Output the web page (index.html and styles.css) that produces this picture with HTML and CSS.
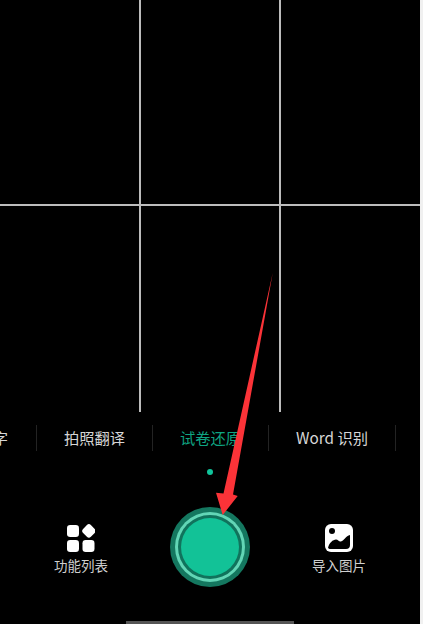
FILE: index.html
```html
<!DOCTYPE html>
<html lang="zh">
<head>
<meta charset="utf-8">
<title>试卷还原</title>
<link rel="stylesheet" href="styles.css">
</head>
<body>
<main class="camera">
  <section class="viewfinder">
    <div class="grid-row grid-row-top">
      <div class="cell"></div><div class="cell"></div><div class="cell cell-last"></div>
    </div>
    <div class="grid-row grid-row-bottom">
      <div class="cell"></div><div class="cell"></div><div class="cell cell-last"></div>
    </div>
  </section>
  <nav class="modes">
    <div class="mode mode-a">文字</div>
    <div class="mode mode-b">拍照翻译</div>
    <div class="mode mode-c active">试卷还原</div>
    <div class="mode mode-d">Word 识别</div>
  </nav>
  <div class="dot-row"><span class="dot"></span></div>
  <section class="controls">
    <div class="tool tool-left">
      <svg class="tool-icon" viewBox="0 0 28 28" width="28" height="28">
        <rect x="0" y="1" width="12" height="12" rx="3.200" fill="#fff"/>
        <rect x="16.400" y="1.400" width="11" height="11" rx="2.800" fill="#fff" transform="rotate(45 21.900 6.900)"/>
        <rect x="0" y="16" width="12" height="12" rx="3.200" fill="#fff"/>
        <rect x="15.500" y="16" width="12" height="12" rx="3.200" fill="#fff"/>
      </svg>
      <span class="tool-label">功能列表</span>
    </div>
    <div class="shutter"><div class="shutter-line"><div class="shutter-gap"><div class="shutter-core"></div></div></div></div>
    <div class="tool tool-right">
      <svg class="tool-icon" viewBox="0 0 28 28" width="28" height="28">
        <rect x="0" y="0" width="28" height="28" rx="6" fill="#fff"/>
        <circle cx="7" cy="7" r="3" fill="#000"/>
        <path d="M3 24 C4 19 8 15.500 11 15.500 C13 15.500 14 18 16 17.500 C18.500 17 21 12 25 11 L25 21 Q25 25 21 25 L4.500 25 Z" fill="#000"/>
      </svg>
      <span class="tool-label">导入图片</span>
    </div>
  </section>
  <div class="home-bar"></div>
  <svg class="arrow" viewBox="0 0 423 624" width="423" height="624">
    <path d="M272.700 273 L233 494.600 L237.700 496 L222.700 515 L216 492.700 L223.500 493.500 Z" fill="#fb3338"/>
  </svg>
</main>
</body>
</html>
```
FILE: styles.css
```css
* { box-sizing: border-box; }
html, body { margin: 0; height: 100%; }
body { background: #f0f0f0; overflow: hidden; }
.camera {
  position: relative;
  width: 420px;
  height: 624px;
  background: #000;
  font-family: "Noto Sans CJK SC", "Noto Sans", sans-serif;
  display: flex;
  flex-direction: column;
  overflow: hidden;
}
.viewfinder { height: 412px; flex: none; display: flex; flex-direction: column; }
.grid-row { display: grid; grid-template-columns: 141px 140px 1fr; }
.grid-row-top { height: 206px; }
.grid-row-bottom { height: 206px; }
.cell { border-right: 2px solid #bcbcbc; }
.cell-last { border-right: 0; }
.grid-row-top .cell { border-bottom: 2px solid #bcbcbc; }
.modes {
  flex: none;
  height: 26px;
  margin-top: 13px;
  display: flex;
  align-items: center;
  margin-left: -83px;
}
.mode {
  flex: none;
  height: 26px;
  line-height: 24px;
  font-size: 15.300px;
  color: #d6d6d6;
  text-align: center;
  border-right: 1px solid #232323;
}
.mode-a { width: 120px; text-align: right; padding-right: 28px; }
.mode-b { width: 116px; }
.mode-c { width: 116px; }
.mode-d { width: 127px; }
.active { color: #0fa583; }
.dot-row { flex: none; height: 6px; margin-top: 18px; display: flex; justify-content: center; }
.dot { width: 6px; height: 6px; border-radius: 50%; background: #10c49b; }
.controls { flex: 1; position: relative; margin-top: 24px; display: grid; grid-template-columns: 170px 80px 1fr; align-items: start; }
.tool { display: flex; flex-direction: column; align-items: center; padding-top: 25px; }
.tool-left { padding-right: 8px; }
.tool-right { padding-left: 8px; }
.tool-icon { display: block; }
.tool-label { font-size: 13.500px; line-height: 16px; margin-top: 5px; color: #d0d0d0; }
.shutter { margin-top: 8px; width: 80px; height: 80px; border-radius: 50%; background: #14775f; padding: 5px; }
.shutter-line { width: 100%; height: 100%; border-radius: 50%; background: #62d6b6; padding: 3px; }
.shutter-gap { width: 100%; height: 100%; border-radius: 50%; background: #10735c; padding: 3px; }
.shutter-core { width: 100%; height: 100%; border-radius: 50%; background: #12c297; }
.home-bar { position: absolute; left: 126px; bottom: 0; width: 168px; height: 3px; background: #555; }
.arrow { position: absolute; left: 0; top: 0; pointer-events: none; }
```
